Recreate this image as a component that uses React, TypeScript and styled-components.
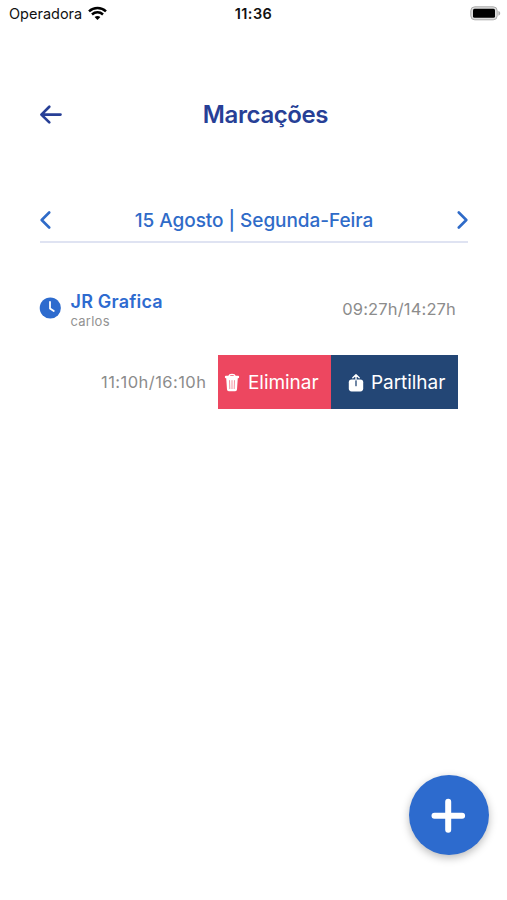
import React from "react";
import styled, { createGlobalStyle } from "styled-components";

const GlobalStyle = createGlobalStyle`
  * { box-sizing: border-box; }
  body { margin: 0; background: #fff; font-family: Inter, "Liberation Sans", sans-serif; }
  button { border: 0; padding: 0; margin: 0; background: none; font: inherit; color: inherit; }
  svg { display: block; flex: none; }
`;

const Screen = styled.main`
  position: relative;
  width: 507px;
  height: 900px;
  background: #fff;
  overflow: hidden;
`;

const StatusBar = styled.header`
  display: grid;
  grid-template-columns: 1fr auto 1fr;
  align-items: center;
  height: 26px;
  padding: 0 6px 0 9px;
  color: #111;
`;

const Carrier = styled.div`
  display: flex;
  align-items: center;
  gap: 6px;
  font-size: 14.5px;
  letter-spacing: 0;
`;

const Clock = styled.time`
  margin-right: 3px;
  font-size: 14.5px;
  font-weight: 600;
  letter-spacing: 0.45px;
`;

const Battery = styled.div`
  justify-self: end;
`;

const TitleBar = styled.div`
  display: grid;
  grid-template-columns: 24px 1fr;
  align-items: center;
  height: 40px;
  margin: 69px 38px 0;
  color: #273f96;
`;

const Title = styled.h1`
  margin: 0;
  text-align: center;
  font-size: 24px;
  line-height: 40px;
  font-weight: 600;
  letter-spacing: -0.4px;
`;

const DateBar = styled.nav`
  display: flex;
  justify-content: space-between;
  align-items: center;
  height: 45px;
  margin: 63px 39px 0 40px;
  border-bottom: 2px solid #dfe3f2;
  color: #2f6bc8;
`;

const DateLabel = styled.span`
  padding-top: 2px;
  font-size: 19px;
  font-weight: 500;
  letter-spacing: -0.05px;
`;

const Appointment = styled.article`
  display: flex;
  align-items: center;
  height: 40px;
  margin: 46px 51px 0 39px;

  > svg { margin-bottom: 2px; }
`;

const Who = styled.div`
  flex: 1;
  margin-left: 9.5px;
`;

const Company = styled.div`
  padding-top: 2px;
  font-size: 18px;
  line-height: 22px;
  font-weight: 600;
  letter-spacing: 0.2px;
  color: #2e6bd0;
`;

const Person = styled.div`
  font-size: 13px;
  line-height: 16px;
  letter-spacing: 0.25px;
  color: #929292;
`;

const Hours = styled.span<{ $tracking: number }>`
  font-size: 16.5px;
  letter-spacing: ${(p) => p.$tracking}px;
  color: #8c8c8c;
  white-space: nowrap;
`;

const SwipedRow = styled.article`
  display: flex;
  align-items: center;
  height: 54px;
  margin: 26px 49px 0 101px;
`;

const Actions = styled.div`
  display: flex;
  height: 54px;
  margin-left: auto;
`;

const Action = styled.button<{ $tone: string; $width: number; $gap: number; $inset: number }>`
  display: flex;
  align-items: center;
  gap: ${(p) => p.$gap}px;
  width: ${(p) => p.$width}px;
  padding: 1px 0 0 ${(p) => p.$inset}px;
  background: ${(p) => p.$tone};
  color: #fff;
  font-size: 19px;
  letter-spacing: -0.05px;
  white-space: nowrap;
`;

const AddButton = styled.button`
  position: absolute;
  left: 409px;
  top: 775px;
  display: grid;
  place-items: center;
  width: 80px;
  height: 80px;
  border-radius: 50%;
  background: #2d6bce;
  box-shadow: 0 3px 8px rgba(0, 0, 0, 0.27);
`;

const WifiIcon = () => (
  <svg width="19" height="15" viewBox="0 0 19 15" fill="none" stroke="#000" strokeWidth="2.5">
    <path d="M1 5.3C5.8 .9 13.2 .9 18 5.3M4 8.5c3.2-2.9 7.8-2.9 11 0" />
    <path d="M6.6 11.1c1.7-1.4 4.1-1.4 5.8 0L9.5 14Z" fill="#000" stroke="none" />
  </svg>
);

const BatteryIcon = () => (
  <svg width="31" height="15" viewBox="0 0 31 15">
    <rect x="0.8" y="0.8" width="26.4" height="13" rx="4" fill="#ddd" stroke="#aaa" />
    <rect x="3" y="2.8" width="22" height="9" rx="1.5" fill="#000" />
    <path d="M28.4 5c2.4.7 2.4 4 0 4.7Z" fill="#aaa" />
  </svg>
);

const BackIcon = () => (
  <svg width="26" height="22" viewBox="0 0 26 22" fill="none" stroke="currentColor" strokeWidth="2.7" strokeLinecap="round" strokeLinejoin="round">
    <path d="M22.5 10.6H3.6M11.3 2.8 3.4 10.6l7.9 7.8" />
  </svg>
);

const Chevron = ({ right = false }: { right?: boolean }) => (
  <svg width="11" height="18" viewBox="0 0 11 18" fill="none" stroke="currentColor" strokeWidth="2.6" strokeLinecap="round" strokeLinejoin="round">
    <path d={right ? "m1.8 1.5 7.5 7.5-7.5 7.5" : "M9.2 1.5 1.7 9l7.5 7.5"} />
  </svg>
);

const ClockIcon = () => (
  <svg width="22" height="22" viewBox="0 0 22 22">
    <circle cx="11.3" cy="11" r="10.6" fill="#2d6bce" />
    <path d="M11 5v6.4l3.8 2.7" fill="none" stroke="#fff" strokeWidth="1.8" strokeLinecap="round" strokeLinejoin="round" />
  </svg>
);

const TrashIcon = () => (
  <svg width="16" height="20" viewBox="0 0 16 20">
    <path d="M5 3.2c.3-2.5 5.7-2.5 6 0" fill="none" stroke="#fff" strokeWidth="1.3" />
    <rect x="0.9" y="2.8" width="14.2" height="2.5" rx="1" fill="#fff" />
    <path d="M2.2 5h11.6l-.8 11.4q-.1 1.8-1.8 1.8H4.8q-1.7 0-1.8-1.8Z" fill="#fff" />
    <path d="m5.5 7.2.3 8.8M8 7.2V16m2.5-8.8-.3 8.8" fill="none" stroke="#ed4760" strokeWidth=".6" />
  </svg>
);

const ShareIcon = () => (
  <svg width="16" height="20" viewBox="0 0 16 20">
    <rect x="0.8" y="6.4" width="14.4" height="12" rx="2.8" fill="#fff" />
    <path d="M8 6.4v6.3" stroke="#234675" strokeWidth="1.3" strokeLinecap="round" />
    <path d="M8 7V2M4.8 4.8 8 1.7l3.2 3.1" fill="none" stroke="#fff" strokeWidth="1.4" strokeLinecap="round" strokeLinejoin="round" />
  </svg>
);

const PlusIcon = () => (
  <svg width="36" height="36" viewBox="0 0 36 36" fill="none" stroke="#fff" strokeWidth="6" strokeLinecap="round">
    <path d="M17.2 4.8v28M3.5 18.8h27.6" />
  </svg>
);

export default function App() {
  return (
    <Screen>
      <GlobalStyle />
      <StatusBar>
        <Carrier>Operadora <WifiIcon /></Carrier>
        <Clock>11:36</Clock>
        <Battery><BatteryIcon /></Battery>
      </StatusBar>
      <TitleBar>
        <button aria-label="Voltar"><BackIcon /></button>
        <Title>Marcações</Title>
      </TitleBar>
      <DateBar>
        <button aria-label="Dia anterior"><Chevron /></button>
        <DateLabel>15 Agosto | Segunda-Feira</DateLabel>
        <button aria-label="Dia seguinte"><Chevron right /></button>
      </DateBar>
      <Appointment>
        <ClockIcon />
        <Who>
          <Company>JR Grafica</Company>
          <Person>carlos</Person>
        </Who>
        <Hours $tracking={0.15}>09:27h/14:27h</Hours>
      </Appointment>
      <SwipedRow>
        <Hours $tracking={0.45}>11:10h/16:10h</Hours>
        <Actions>
          <Action $tone="#ed4760" $width={113} $gap={8} $inset={6}><TrashIcon />Eliminar</Action>
          <Action $tone="#234675" $width={127} $gap={7} $inset={17}><ShareIcon />Partilhar</Action>
        </Actions>
      </SwipedRow>
      <AddButton aria-label="Adicionar"><PlusIcon /></AddButton>
    </Screen>
  );
}
